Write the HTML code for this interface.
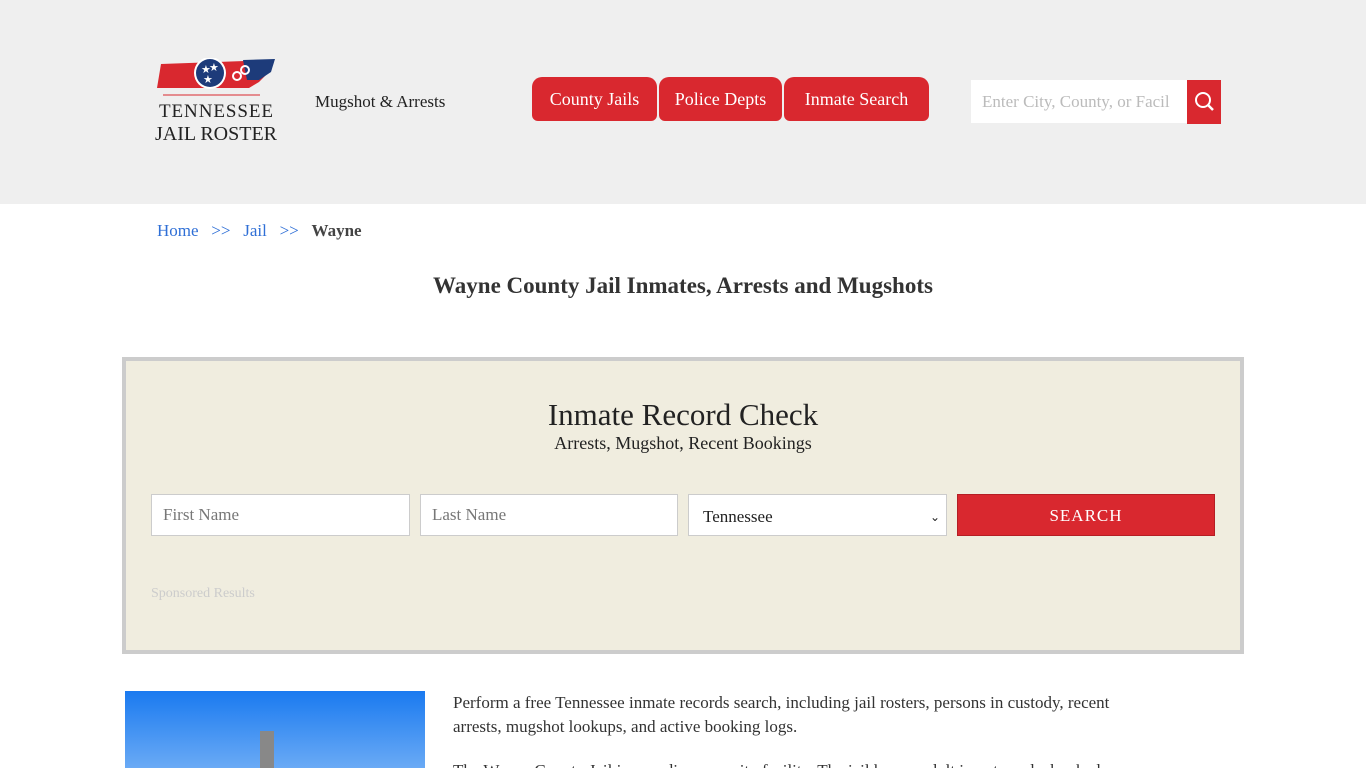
<!DOCTYPE html>
<html><head><meta charset="utf-8"><style>
*{box-sizing:border-box;margin:0;padding:0}
html,body{width:1366px;height:768px;overflow:hidden}
body{background:#fff;font-family:"Liberation Serif","DejaVu Serif",serif;color:#222;position:relative}
.hdr{position:absolute;left:0;top:0;width:1366px;height:204px;background:#efefef}
.tag{position:absolute;left:315px;top:92px;font-size:17px;color:#222}
.nav a{position:absolute;top:77px;height:44px;background:#d9282f;color:#fff;font-size:18px;line-height:44px;text-align:center;border-radius:10px 10px 6px 6px;text-decoration:none}
.sb{position:absolute;left:971px;top:80px;width:216px;height:43px;background:#fff;color:#bbb;font-size:17px;line-height:43px;padding-left:11px;white-space:nowrap;overflow:hidden}
.sbb{position:absolute;left:1187px;top:80px;width:34px;height:44px;background:#d9282f}
.bc{position:absolute;left:157px;top:221px;font-size:17px}
.bc a{color:#2f6fd6;text-decoration:none}
h1{position:absolute;left:0;width:1366px;top:273px;text-align:center;font-size:23px;font-weight:bold;color:#333}
.box{position:absolute;left:122px;top:357px;width:1122px;height:297px;background:#f0eddf;border:4px solid #ccc}
.box h2{position:absolute;top:36px;width:100%;text-align:center;font-weight:normal;font-size:31px;color:#222}
.box .sub{position:absolute;top:72px;width:100%;text-align:center;font-size:18px}
.in{position:absolute;top:133px;height:42px;width:259px;background:#fff;border:1px solid #ccc;font-size:17px;color:#777;line-height:40px;padding-left:11px}
.btn{position:absolute;left:831px;top:133px;width:258px;height:42px;background:#d9282f;border:1px solid #b51e24;color:#fff;text-align:center;line-height:42px;font-size:17px;letter-spacing:1px}
.sp{position:absolute;left:25px;top:225px;font-size:14px;color:#ccc}
.img{position:absolute;left:125px;top:691px;width:300px;height:77px;background:linear-gradient(180deg,#1a7af0,#6aaaf5)}
.p{position:absolute;left:453px;font-size:17px;line-height:24px;color:#333;width:700px}
</style></head><body>
<div class="hdr"></div>
<svg style="position:absolute;left:153px;top:58px" width="130" height="88" viewBox="0 0 130 88">
<path d="M8 6 L120 2 L116 14 L106 24 L96 30 L4 30 L6 18 Z" fill="#d9282f"/>
<path d="M90 2 L122 1 L118 14 L106 22 L94 22 Z" fill="#1d3b7a"/>
<circle cx="57" cy="15" r="16" fill="#fff"/><circle cx="57" cy="15" r="14" fill="#1d3b7a"/>
<text x="48" y="15" fill="#fff" font-size="11">★</text><text x="56" y="13" fill="#fff" font-size="11">★</text><text x="50" y="25" fill="#fff" font-size="11">★</text>
<circle cx="84" cy="18" r="4" fill="none" stroke="#fff" stroke-width="2"/><circle cx="92" cy="12" r="4" fill="none" stroke="#fff" stroke-width="2"/>
<line x1="10" y1="37" x2="107" y2="37" stroke="#d9282f"/>
<text x="63" y="59" text-anchor="middle" font-family="Liberation Serif" font-size="19" fill="#222" textLength="114">TENNESSEE</text>
<text x="63" y="82" text-anchor="middle" font-family="Liberation Serif" font-size="20" fill="#222" textLength="122">JAIL ROSTER</text>
</svg>
<div class="tag">Mugshot &amp; Arrests</div>
<div class="nav"><a style="left:532px;width:125px">County Jails</a><a style="left:659px;width:123px">Police Depts</a><a style="left:784px;width:145px">Inmate Search</a></div>
<div class="sb">Enter City, County, or Facil</div>
<div class="sbb"><svg width="34" height="44"><circle cx="16" cy="20" r="7" fill="none" stroke="#fff" stroke-width="2"/><line x1="21" y1="25" x2="26" y2="30" stroke="#fff" stroke-width="2.5"/></svg></div>
<div class="bc"><a>Home</a>&nbsp;&nbsp; <a>&gt;&gt;</a>&nbsp;&nbsp; <a>Jail</a>&nbsp;&nbsp; <a>&gt;&gt;</a>&nbsp;&nbsp; <b style="color:#444">Wayne</b></div>
<h1>Wayne County Jail Inmates, Arrests and Mugshots</h1>
<div class="box">
<h2>Inmate Record Check</h2>
<div class="sub">Arrests, Mugshot, Recent Bookings</div>
<div class="in" style="left:25px">First Name</div>
<div class="in" style="left:294px;width:258px">Last Name</div>
<div class="in" style="left:562px;color:#222;line-height:44px;padding-left:14px">Tennessee<span style="position:absolute;right:6px;font-size:12px">&#8964;</span></div>
<div class="btn">SEARCH</div>
<div class="sp">Sponsored Results</div>
</div>
<div class="img"><div style="position:absolute;left:135px;top:40px;width:14px;height:37px;background:#888"></div></div>
<div class="p" style="top:691px">Perform a free Tennessee inmate records search, including jail rosters, persons in custody, recent arrests, mugshot lookups, and active booking logs.</div>
<div class="p" style="top:759px;width:800px">The Wayne County Jail is a medium security facility. The jail has an adult inmate and a booked</div>
</body></html>
